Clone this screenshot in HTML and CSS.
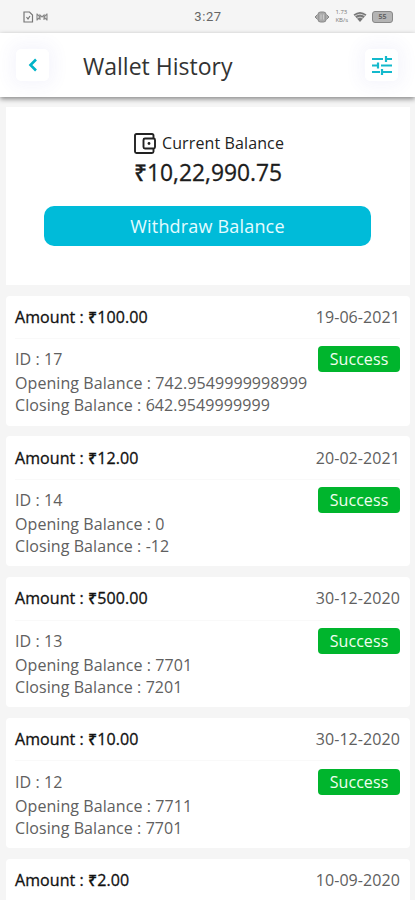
FILE: index.html
```html
<!DOCTYPE html>
<html lang="en">
<head>
  <meta charset="UTF-8">
  <meta name="viewport" content="width=device-width, initial-scale=1.0">
  <title>Wallet History</title>
  <link rel="stylesheet" href="styles.css">
</head>
<body>
  <div class="statusbar">
    <div class="status-left">
      <svg width="11" height="12" viewBox="0 0 11 12" fill="none" stroke="#777" stroke-width="1.2"><path d="M1 1h5.500l3 3v7H1zM3.500 6l1.500 2 2-3"/></svg>
      <svg width="12" height="10" viewBox="0 0 12 10" fill="none" stroke="#888" stroke-width="1.1"><path d="M1 1.500v7M11 1.500v7M1 2l3 3-3 3M11 2L8 5l3 3M4 8V3l2 2 2-2v5"/></svg>
    </div>
    <div class="time">3:27</div>
    <div class="status-right">
      <svg width="16" height="12" viewBox="0 0 16 12" fill="#aaa" stroke="#888"><path d="M3.500 3.500L1 6l2.500 2.500M12.500 3.500L15 6l-2.500 2.500"/><rect x="4" y="1" width="8" height="10" rx="2.500"/><path d="M7 3.500v5M9.500 3.500v5" stroke="#ccc"/></svg>
      <div class="speed"><span>1.73</span><span>KB/s</span></div>
      <svg width="14" height="12" viewBox="0 0 14 12"><path d="M.5 3.500Q7-1.500 13.500 3.500L7 11z" fill="#777"/><path d="M2 5Q7 1.500 12 5M4 7.200Q7 5 10 7.200" fill="none" stroke="#ddd" stroke-width=".9"/></svg>
      <div class="battery">55</div>
    </div>
  </div>

  <div class="header">
    <button class="icon-btn" aria-label="Back">
      <svg width="10" height="14" viewBox="0 0 10 14" fill="none" stroke="#00b4c8" stroke-width="2.600"><path d="M8 1.500L2.500 7 8 12.500"/></svg>
    </button>
    <h1>Wallet History</h1>
    <button class="icon-btn filter" aria-label="Filter">
      <svg width="20" height="20" viewBox="0 0 20 20" fill="none" stroke="#14b9cc" stroke-width="2.200"><path d="M0 4h11M14 4h6M14 1v6M0 10.500h6M6 7.500v6M9 10.500h11M0 17h8M10 14v6M10 17h10"/></svg>
    </button>
  </div>

  <div class="balance">
    <div class="balance-label">
      <svg width="22" height="21" viewBox="0 0 22 21" fill="none" stroke="#222" stroke-width="1.900"><path d="M19.500 5V2.500q0-1.500-1.500-1.500H2.500Q1 1 1 2.500v16Q1 20 2.500 20H18q1.500 0 1.500-1.500V16"/><rect x="9.500" y="5.500" width="11.500" height="10" rx="1.500"/><circle cx="15" cy="10.500" r="1.400" fill="#222" stroke="none"/></svg>
      <span>Current Balance</span>
    </div>
    <div class="balance-value">₹10,22,990.75</div>
    <button class="withdraw">Withdraw Balance</button>
  </div>

  <div class="card">
    <div class="card-top"><b>Amount : ₹100.00</b><span class="date">19-06-2021</span></div>
    <div class="card-body">
      <div><p class="id">ID : 17</p><p>Opening Balance : 742.9549999998999</p><p>Closing Balance : 642.9549999999</p></div>
      <span class="badge">Success</span>
    </div>
  </div>

  <div class="card">
    <div class="card-top"><b>Amount : ₹12.00</b><span class="date">20-02-2021</span></div>
    <div class="card-body">
      <div><p class="id">ID : 14</p><p>Opening Balance : 0</p><p>Closing Balance : -12</p></div>
      <span class="badge">Success</span>
    </div>
  </div>

  <div class="card">
    <div class="card-top"><b>Amount : ₹500.00</b><span class="date">30-12-2020</span></div>
    <div class="card-body">
      <div><p class="id">ID : 13</p><p>Opening Balance : 7701</p><p>Closing Balance : 7201</p></div>
      <span class="badge">Success</span>
    </div>
  </div>

  <div class="card">
    <div class="card-top"><b>Amount : ₹10.00</b><span class="date">30-12-2020</span></div>
    <div class="card-body">
      <div><p class="id">ID : 12</p><p>Opening Balance : 7711</p><p>Closing Balance : 7701</p></div>
      <span class="badge">Success</span>
    </div>
  </div>

  <div class="card last">
    <div class="card-top"><b>Amount : ₹2.00</b><span class="date">10-09-2020</span></div>
  </div>
</body>
</html>
```
FILE: styles.css
```css
* {
  box-sizing: border-box;
}

body {
  margin: 0;
  height: 900px;
  overflow: hidden;
  background: #f5f5f5;
  font-family: 'Open Sans', 'Noto Sans', sans-serif;
  color: #606060;
}

.statusbar {
  display: grid;
  grid-template-columns: 1fr auto 1fr;
  align-items: center;
  height: 33px;
  padding: 0 22px 0 23px;
}

.status-left, .status-right {
  display: flex;
  align-items: center;
  gap: 2px;
}

.status-right {
  justify-content: flex-end;
  gap: 5px;
}

.time {
  font-family: Roboto, sans-serif;
  font-size: 13px;
  letter-spacing: 0.6px;
  color: #666;
}

.speed {
  display: flex;
  flex-direction: column;
  gap: 1px;
  font-size: 6px;
  line-height: 7px;
  color: #777;
}

.battery {
  width: 21px;
  height: 12px;
  border: 1px solid #888;
  border-radius: 3px;
  background: #b4b4b4;
  color: #666;
  font-size: 7px;
  font-weight: 700;
  line-height: 10px;
  text-align: center;
}

.header {
  position: relative;
  display: flex;
  align-items: center;
  height: 64px;
  padding: 0 17px 0 16px;
  background: #fff;
  box-shadow: 0 2px 5px rgba(0, 0, 0, 0.45);
}

h1 {
  flex: 1;
  margin: 1px 0 0 34px;
  font-size: 23px;
  font-weight: 400;
  color: #333;
}

.icon-btn {
  display: flex;
  align-items: center;
  justify-content: center;
  width: 33px;
  height: 32px;
  padding: 0;
  border: none;
  border-radius: 5px;
  background: #fff;
  box-shadow: 0 0 16px 6px rgba(80, 80, 200, 0.05);
}

.balance {
  height: 177.6px;
  margin: 10px 5px 11px 6px;
  padding-top: 24px;
  background: #fff;
  text-align: center;
}

.balance-label {
  display: flex;
  justify-content: center;
  align-items: center;
  gap: 6px;
  height: 24px;
  margin-left: 2px;
  font-size: 16px;
  letter-spacing: 0.12px;
  color: #222;
}

.balance-value {
  height: 34px;
  font-size: 22.8px;
  font-weight: 500;
  line-height: 35px;
  color: #1c1c1c;
  -webkit-text-stroke: 0.3px #1c1c1c;
}

.withdraw {
  width: 327px;
  height: 40px;
  margin: 17px 1px 0 0;
  padding: 0;
  border: none;
  border-radius: 10px;
  background: #00bbd9;
  color: #e4fbff;
  font-family: inherit;
  font-size: 18px;
  letter-spacing: 0.18px;
}

.card {
  height: 130px;
  margin: 0 5px 10.8px 6px;
  padding: 0 10px 0 9px;
  border-radius: 4px;
  background: #fff;
  font-size: 16px;
  letter-spacing: 0.08px;
}

.card.last {
  height: 41px;
  margin-bottom: 0;
  border-radius: 4px 4px 0 0;
}

.card-top {
  display: flex;
  justify-content: space-between;
  align-items: center;
  height: 43.400px;
  border-bottom: 1px solid #f9f9f9;
}

.card-top b {
  font-weight: 500;
  color: #111;
  -webkit-text-stroke: 0.3px #111;
}

.card-body {
  display: flex;
  justify-content: space-between;
  padding-top: 7.200px;
}

.card-body p {
  margin: 0;
  line-height: 22px;
  white-space: nowrap;
}

.card-body .id {
  line-height: 26px;
}

.badge {
  width: 82px;
  height: 26px;
  border-radius: 4px;
  background: #00b52d;
  color: #f0fff0;
  line-height: 26px;
  text-align: center;
}
```
